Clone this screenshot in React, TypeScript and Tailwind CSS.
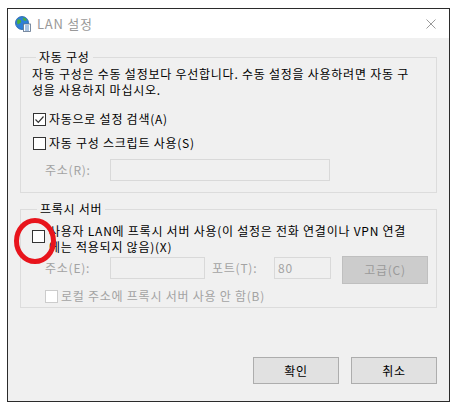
// LAN settings dialog (Windows style) with red highlight circle
const font = { fontFamily: '"Noto Sans CJK KR", "Malgun Gothic", "Liberation Sans", sans-serif' };

function GlobeIcon() {
  return (
    <svg width="16" height="16" viewBox="0 0 16 16">
      <circle cx="7" cy="7" r="6.5" fill="#2f7fd6" />
      <path d="M3 3.5c1.5-.5 2.5.5 3 1.5s-.5 2-1.5 2.5S3 9 2.5 8 1.8 4 3 3.5z" fill="#4caf3a" />
      <path d="M8 1.5c1.5 0 3 1 3.5 2s-1 1.5-2 1.2S7.5 3 8 1.5z" fill="#4caf3a" />
      <circle cx="7" cy="7" r="6.5" fill="none" stroke="#1d5ea8" strokeWidth="0.8" />
      <rect x="8.5" y="8" width="7" height="7.5" fill="#ffffff" stroke="#5a6f8a" strokeWidth="0.8" />
      <path d="M10 10h4M10 12h4M10 14h4" stroke="#3a76c0" strokeWidth="0.9" />
    </svg>
  );
}

function Check({ checked = false, disabled = false }: { checked?: boolean; disabled?: boolean }) {
  return (
    <span
      className={`flex h-[13px] w-[13px] shrink-0 items-center justify-center border bg-white ${
        disabled ? 'border-[#cccccc]' : 'border-[#333333]'
      }`}
    >
      {checked && (
        <svg width="11" height="11" viewBox="0 0 11 11">
          <path d="M1.5 5.5l2.8 2.8L9.5 2.5" fill="none" stroke="#333333" strokeWidth="1.2" />
        </svg>
      )}
    </span>
  );
}

export default function App() {
  return (
    <div className="h-[411px] w-[457px] bg-white pl-[7px] pt-[8px] text-[12px] tracking-[0.75px] text-black" style={font}>
      <div className="flex h-[394px] w-[443px] flex-col border border-[#2b2b2b]">
        {/* Title bar */}
        <div className="flex h-[29px] shrink-0 items-center bg-white pl-[7px]">
          <GlobeIcon />
          <span className="ml-[6px] text-[13px] leading-[16px] text-[#999999]">LAN 설정</span>
          <svg className="ml-auto mr-[13px]" width="10" height="10" viewBox="0 0 10 10">
            <path d="M0.5 0.5l9 9M9.5 0.5l-9 9" stroke="#9a9a9a" strokeWidth="1" />
          </svg>
        </div>

        {/* Body */}
        <div className="relative flex flex-1 flex-col bg-[#f0f0f0] pl-[12px]">
          {/* Automatic configuration */}
          <fieldset className="mt-[11px] w-[417px] border border-[#dcdcdc] pb-[11px] pl-[11px]">
            <legend className="ml-[4px] px-[3px] leading-[16px]">자동 구성</legend>
            <p className="mt-[1px] whitespace-nowrap leading-[16px]">
              자동 구성은 수동 설정보다 우선합니다. 수동 설정을 사용하려면 자동 구
              <br />
              성을 사용하지 마십시오.
            </p>
            <div className="mt-[13px] flex h-[16px] items-center pl-[1px]">
              <Check checked />
              <span className="ml-[3px] leading-[16px]">자동으로 설정 검색(A)</span>
            </div>
            <div className="mt-[8px] flex h-[16px] items-center pl-[1px]">
              <Check />
              <span className="ml-[3px] leading-[16px]">자동 구성 스크립트 사용(S)</span>
            </div>
            <div className="mt-[8px] flex items-center pl-[13px]">
              <span className="w-[65px] leading-[16px] text-[#a3a3a3]">주소(R):</span>
              <div className="h-[22px] w-[220px] border border-[#d9d9d9] bg-[#f0f0f0]" />
            </div>
          </fieldset>

          {/* Proxy server */}
          <fieldset className="mt-[8px] w-[417px] border border-[#dcdcdc] pb-[3px] pl-[11px]">
            <legend className="ml-[5px] px-[3px] leading-[16px]">프록시 서버</legend>
            <div className="mt-[6px] flex items-start">
              <span className="mt-[7px]">
                <Check />
              </span>
              <span className="ml-[4px] whitespace-nowrap leading-[16px]">
                사용자 LAN에 프록시 서버 사용(이 설정은 전화 연결이나 VPN 연결
                <br />
                에는 적용되지 않음)(X)
              </span>
            </div>
            <div className="mt-[1px] flex items-start pl-[13px]">
              <span className="mt-[4px] w-[65px] leading-[16px] text-[#a3a3a3]">주소(E):</span>
              <div className="mt-[1px] h-[22px] w-[95px] border border-[#d9d9d9] bg-[#f0f0f0]" />
              <span className="ml-[7px] mt-[4px] w-[62px] leading-[16px] text-[#a3a3a3]">포트(T):</span>
              <div className="mt-[1px] flex h-[22px] w-[57px] items-center border border-[#d9d9d9] bg-[#f0f0f0] pl-[3px] leading-[16px] text-[#a3a3a3]">
                80
              </div>
              <div className="ml-[11px] flex h-[28px] w-[86px] items-center justify-center border border-[#bfbfbf] bg-[#cccccc] leading-[16px] text-[#9a9a9a]">
                고급(C)
              </div>
            </div>
            <div className="mt-[4px] flex h-[16px] items-center pl-[13px]">
              <Check disabled />
              <span className="ml-[3px] leading-[16px] text-[#a3a3a3]">로컬 주소에 프록시 서버 사용 안 함(B)</span>
            </div>
          </fieldset>

          {/* Buttons */}
          <div className="mt-[49px] flex w-[417px] justify-end gap-[12px]">
            <div className="flex h-[27px] w-[86px] items-center justify-center border border-[#adadad] bg-[#e1e1e1] leading-[16px]">
              확인
            </div>
            <div className="flex h-[27px] w-[86px] items-center justify-center border border-[#adadad] bg-[#e1e1e1] leading-[16px]">
              취소
            </div>
          </div>

          {/* Red highlight circle over the proxy checkbox */}
          <svg className="pointer-events-none absolute left-[5px] top-[179px]" width="44" height="48" viewBox="0 0 44 48">
            <ellipse cx="22" cy="24" rx="18.5" ry="20.5" fill="none" stroke="#e8141c" strokeWidth="5" />
          </svg>
        </div>
      </div>
    </div>
  );
}
